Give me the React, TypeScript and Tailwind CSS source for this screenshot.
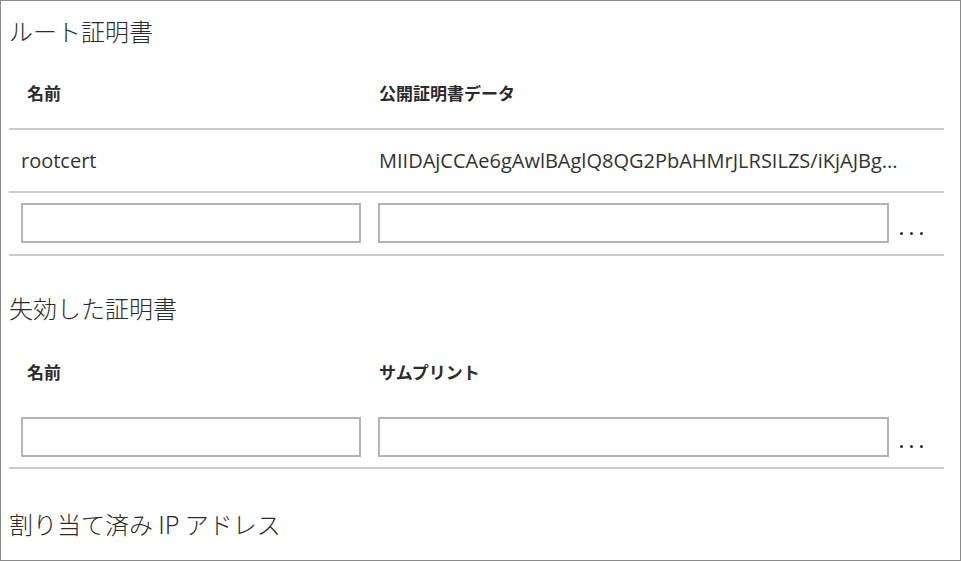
const jp = "font-['Noto_Sans_CJK_JP',sans-serif]"
const latin = "font-['Open_Sans','Noto_Sans_CJK_JP',sans-serif]"

function Dots({ mb }: { mb: string }) {
  return (
    <div className={`flex gap-[7px] self-end ${mb} ml-[11px]`}>
      <span className="w-[3px] h-[3px] rounded-full bg-[#2b2b2b]" />
      <span className="w-[3px] h-[3px] rounded-full bg-[#2b2b2b]" />
      <span className="w-[3px] h-[3px] rounded-full bg-[#2b2b2b]" />
    </div>
  )
}

function Inputs({ dotsMb }: { dotsMb: string }) {
  return (
    <div className="flex pl-[12px]">
      <input className="w-[340px] h-[40px] border-2 border-[#b4b4b4] outline-none" />
      <input className="ml-[17px] w-[511px] h-[40px] border-2 border-[#b4b4b4] outline-none" />
      <Dots mb={dotsMb} />
    </div>
  )
}

function Title({ children, mt }: { children: string; mt: string }) {
  return (
    <h2 className={`${mt} h-[32px] leading-[32px] text-[24px] font-light text-[#2b2b2b] ${jp}`}>
      {children}
    </h2>
  )
}

function HeaderCells({ right }: { right: string }) {
  return (
    <div className={`flex text-[17px] font-bold text-[#2b2b2b] leading-[20px] ${jp}`}>
      <div className="w-[370px] pl-[18px]">名前</div>
      <div>{right}</div>
    </div>
  )
}

export default function App() {
  return (
    <div className="w-[961px] h-[561px] border border-[#8a8a8a] bg-white overflow-hidden pl-[8px]">
      <div className="w-[935px]">
        {/* ルート証明書 */}
        <Title mt="mt-[14px]">ルート証明書</Title>
        <div className="h-[83px] pt-[11px] flex items-center border-b-2 border-[#cccccc]">
          <HeaderCells right="公開証明書データ" />
        </div>
        <div className={`h-[61px] flex items-center text-[20px] text-[#333] ${latin}`}>
          <div className="w-[370px] pl-[12px]">rootcert</div>
          <div className="whitespace-nowrap">MIIDAjCCAe6gAwlBAglQ8QG2PbAHMrJLRSILZS/iKjAJBg...</div>
        </div>
        <div className="border-t-2 border-[#cccccc] pt-[10px] pb-[11px] border-b-2">
          <Inputs dotsMb="mb-[8px]" />
        </div>

        {/* 失効した証明書 */}
        <Title mt="mt-[36px]">失効した証明書</Title>
        <div className="pt-[38px]">
          <HeaderCells right="サムプリント" />
        </div>
        <div className="pt-[35px] pb-[10px] border-b-2 border-[#cccccc]">
          <Inputs dotsMb="mb-[9px]" />
        </div>

        {/* 割り当て済み IP アドレス */}
        <Title mt="mt-[39px]">割り当て済み IP アドレス</Title>
      </div>
    </div>
  )
}
